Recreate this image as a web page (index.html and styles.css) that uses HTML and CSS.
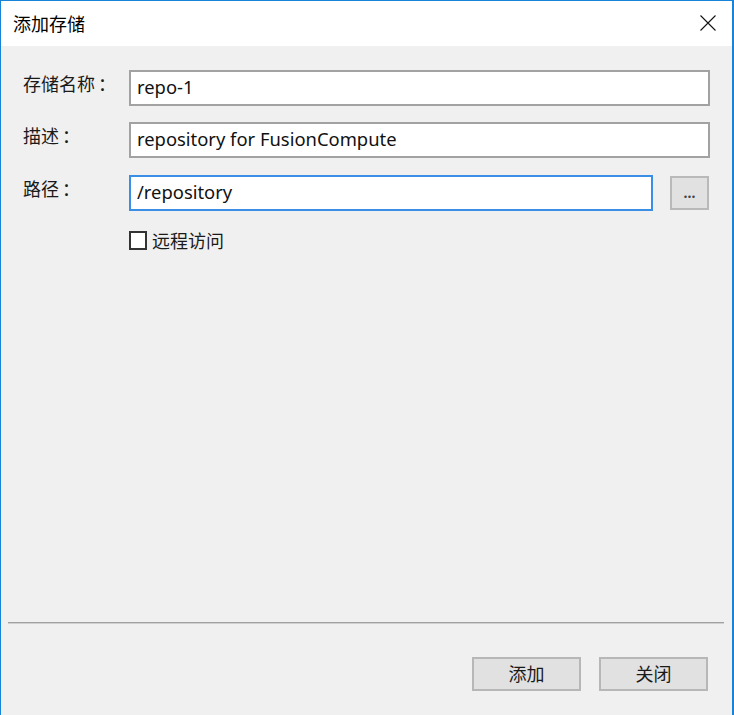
FILE: index.html
```html
<!DOCTYPE html>
<html lang="zh">
<head>
<meta charset="utf-8">
<link rel="stylesheet" href="styles.css">
</head>
<body>
<div class="window">
  <div class="titlebar">
    <span class="title">添加存储</span>
    <svg class="close" width="16" height="16" viewBox="0 0 16 16"><path d="M0.5 0.5 L15.5 15.5 M15.5 0.5 L0.5 15.5" stroke="#111" stroke-width="1.1" fill="none"/></svg>
  </div>
  <div class="content">
    <div class="form">
      <div class="row">
        <span class="label">存储名称<span class="colon">：</span></span>
        <div class="field">repo-1</div>
      </div>
      <div class="row">
        <span class="label">描述<span class="colon">：</span></span>
        <div class="field">repository for FusionCompute</div>
      </div>
      <div class="row">
        <span class="label">路径<span class="colon">：</span></span>
        <div class="field focused">/repository</div>
        <div class="browse">...</div>
      </div>
      <div class="check-row">
        <span class="checkbox"></span>
        <span class="check-label">远程访问</span>
      </div>
    </div>
    <div class="footer">
      <div class="separator"></div>
      <div class="buttons">
        <div class="btn">添加</div>
        <div class="btn">关闭</div>
      </div>
    </div>
  </div>
</div>
</body>
</html>
```
FILE: styles.css
```css
* { box-sizing: border-box; }
html, body { margin: 0; padding: 0; }
body {
  width: 734px;
  height: 715px;
  overflow: hidden;
  font-family: "Noto Sans", "Noto Sans CJK SC", sans-serif;
  color: #1a1a1a;
}
.window {
  width: 734px;
  height: 715px;
  border: 1px solid #1883d7;
  border-bottom: none;
  border-right-width: 2px;
  background: #f0f0f0;
  display: flex;
  flex-direction: column;
}
.titlebar {
  height: 45px;
  background: #ffffff;
  display: flex;
  align-items: center;
  justify-content: space-between;
  padding: 0 16px 0 12px;
}
.title {
  font-family: "Noto Sans CJK SC", sans-serif;
  font-size: 18px;
  color: #000;
  margin-top: -2px;
}
.close { margin-top: -2px; }
.content {
  flex: 1;
  display: flex;
  flex-direction: column;
  justify-content: space-between;
}
.form {
  padding: 24px 0 0 22px;
  display: flex;
  flex-direction: column;
}
.row {
  display: flex;
  align-items: center;
  height: 36px;
  margin-bottom: 16px;
}
.row:nth-child(2) { margin-bottom: 17px; }
.label {
  width: 106px;
  font-family: "Noto Sans CJK SC", sans-serif;
  font-size: 18px;
  line-height: 24px;
  color: #1a1a1a;
  margin-top: -10px;
  white-space: nowrap;
}
.colon {
  margin-left: 3px;
}
.field {
  width: 581px;
  height: 36px;
  background: #fff;
  border: 2px solid #a2a2a2;
  padding: 0 6px;
  font-size: 18.4px;
  line-height: 30px;
  color: #111;
}
.field.focused {
  width: 524px;
  border-color: #3a8ee6;
}
.browse {
  width: 39px;
  height: 34px;
  margin-left: 17px;
  background: #e1e1e1;
  border: 2px solid #b9b9b9;
  font-size: 14px;
  font-weight: bold;
  text-align: center;
  line-height: 30px;
  color: #444;
}
.check-row {
  display: flex;
  align-items: center;
  margin-left: 106px;
  margin-top: 1px;
}
.checkbox {
  width: 18px;
  height: 19px;
  border: 2px solid #333;
  background: #fff;
}
.check-label {
  margin-left: 5px;
  font-family: "Noto Sans CJK SC", sans-serif;
  font-size: 18px;
  line-height: 24px;
  color: #1a1a1a;
}
.footer {
  padding: 0 8px 24px 7px;
}
.separator {
  height: 2px;
  border-top: 1px solid #a0a0a0;
  border-bottom: 1px solid #d0d0d0;
  width: 716px;
}
.buttons {
  display: flex;
  justify-content: flex-end;
  gap: 18px;
  margin-top: 33px;
  padding-right: 16px;
}
.btn {
  width: 109px;
  height: 34px;
  background: #e1e1e1;
  border: 2px solid #b7b7b7;
  font-family: "Noto Sans CJK SC", sans-serif;
  font-size: 18px;
  text-align: center;
  line-height: 29px;
  color: #1a1a1a;
}
```
